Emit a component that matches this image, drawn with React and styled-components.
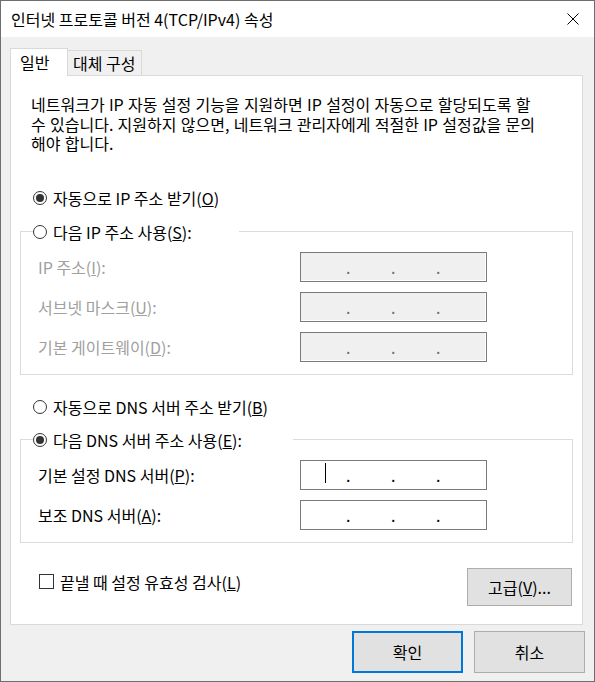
import React from "react";
import styled, { createGlobalStyle } from "styled-components";

const GlobalStyle = createGlobalStyle`
  html, body {
    margin: 0;
    padding: 0;
    background: #fff;
  }
  body {
    font-family: "Noto Sans CJK KR", "Noto Sans", sans-serif;
  }
`;

const Window = styled.div`
  width: 595px;
  height: 682px;
  box-sizing: border-box;
  border: 1px solid #6e6e6e;
  display: flex;
  flex-direction: column;
  background: #f0f0f0;
  font-family: "Noto Sans CJK KR", "Noto Sans", sans-serif;
  font-size: 16px;
  color: #000;
`;

const TitleBar = styled.div`
  height: 36px;
  flex-shrink: 0;
  background: #fff;
  display: flex;
  align-items: center;
  justify-content: space-between;
  padding: 0 15px 0 10px;
`;

const Title = styled.div`
  line-height: 20px;
  white-space: nowrap;
`;

const Body = styled.div`
  flex: 1;
  display: flex;
  flex-direction: column;
  padding: 11px 9px 8px 9px;
`;

const Tabs = styled.div`
  display: flex;
  align-items: flex-end;
  height: 27px;
`;

const Tab = styled.div`
  box-sizing: border-box;
  display: flex;
  align-items: center;
  white-space: nowrap;
  border: 1px solid #d9d9d9;
  border-bottom: none;
  line-height: 20px;
  background: ${(p) => (p.$active ? "#fff" : "#f0f0f0")};
  width: ${(p) => (p.$active ? "58px" : "75px")};
  height: ${(p) => (p.$active ? "28px" : "25px")};
  margin-bottom: ${(p) => (p.$active ? "-1px" : "0")};
  margin-left: ${(p) => (p.$active ? "0" : "-1px")};
  padding: ${(p) => (p.$active ? "0 0 2px 9px" : "0 0 0 5px")};
  position: relative;
  z-index: ${(p) => (p.$active ? 1 : 0)};
`;

const Panel = styled.div`
  height: 550px;
  box-sizing: border-box;
  margin-right: 2px;
  border: 1px solid #d9d9d9;
  background: #fff;
  display: flex;
  flex-direction: column;
`;

const Intro = styled.div`
  margin: 19px 0 0 20px;
  display: flex;
  flex-direction: column;
  word-spacing: 0.7px;
`;

const IntroLine = styled.span`
  height: 19.5px;
  line-height: 19.5px;
  white-space: nowrap;
`;

const Option = styled.label`
  display: flex;
  align-items: center;
  gap: 6px;
  height: 20px;
  line-height: 20px;
  white-space: nowrap;
  margin-top: ${(p) => p.$top || 0}px;
  margin-left: ${(p) => p.$left || 0}px;
`;

const Radio = styled.span`
  width: 14px;
  height: 14px;
  box-sizing: border-box;
  border: 1px solid #333;
  border-radius: 50%;
  background: #fff;
  flex-shrink: 0;
  display: flex;
  align-items: center;
  justify-content: center;

  &::after {
    content: "";
    width: 8px;
    height: 8px;
    border-radius: 50%;
    background: ${(p) => (p.$checked ? "#333" : "transparent")};
  }
`;

const Group = styled.fieldset`
  margin: ${(p) => p.$top}px 9px 0 9px;
  padding: 10px 0 12px 0;
  min-width: 0;
  border: 1px solid #dcdcdc;
  display: flex;
  flex-direction: column;
  gap: 10px;

  & > legend {
    padding: 0;
    margin-left: 12px;
    width: ${(p) => p.$legend}px;
  }
`;

const Row = styled.div`
  display: flex;
  align-items: center;
  height: 30px;
  padding-left: 17px;
`;

const Label = styled.span`
  width: 262px;
  line-height: 20px;
  white-space: nowrap;
  color: ${(p) => (p.$disabled ? "#a0a0a0" : "#000")};
`;

const IpBox = styled.div`
  position: relative;
  width: 187px;
  height: 30px;
  box-sizing: border-box;
  border: 1px solid #7a7a7a;
  background: ${(p) => (p.$disabled ? "#f0f0f0" : "#fff")};
  box-shadow: ${(p) => (p.$disabled ? "inset -1px -1px 0 #fff" : "none")};
  display: flex;
  align-items: center;
  padding-left: 45px;
  gap: 41px;
  color: ${(p) => (p.$disabled ? "#6d6d6d" : "#000")};

  &::before {
    content: "";
    display: ${(p) => (p.$caret ? "block" : "none")};
    position: absolute;
    left: 24px;
    top: 2px;
    width: 1px;
    height: 20px;
    background: #000;
  }
`;

const Dot = styled.span`
  width: 4px;
  text-align: center;
  line-height: 20px;
`;

const Options = styled.div`
  display: flex;
  justify-content: space-between;
  align-items: flex-start;
  margin-top: 25px;
  padding: 0 10px 0 28px;
`;

const CheckLabel = styled.label`
  display: flex;
  align-items: center;
  gap: 6px;
  height: 20px;
  margin-top: 4px;
  line-height: 20px;
  white-space: nowrap;
`;

const CheckBox = styled.span`
  width: 15px;
  height: 15px;
  box-sizing: border-box;
  border: 1px solid #333;
  background: #fff;
`;

const Button = styled.button`
  box-sizing: border-box;
  width: ${(p) => p.$w}px;
  height: ${(p) => p.$h}px;
  padding: 0;
  background: #e1e1e1;
  border: ${(p) => (p.$default ? "2px solid #0078d7" : "1px solid #adadad")};
  font-family: inherit;
  font-size: 16px;
  color: #000;
  line-height: 20px;
`;

const Footer = styled.div`
  display: flex;
  justify-content: flex-end;
  gap: 11px;
  margin-top: 6px;
`;

const CloseIcon = () => (
  <svg width="12" height="12" viewBox="0 0 12 12">
    <path d="M0.5 0.5 L11.5 11.5 M11.5 0.5 L0.5 11.5" stroke="#000" strokeWidth="1" fill="none" />
  </svg>
);

const IpField = ({ disabled, caret }) => (
  <IpBox $disabled={disabled} $caret={caret}>
    <Dot>.</Dot>
    <Dot>.</Dot>
    <Dot>.</Dot>
  </IpBox>
);

export default function App() {
  return (
    <>
      <GlobalStyle />
      <Window>
        <TitleBar>
          <Title>인터넷 프로토콜 버전 4(TCP/IPv4) 속성</Title>
          <CloseIcon />
        </TitleBar>
        <Body>
          <Tabs>
            <Tab $active>일반</Tab>
            <Tab>대체 구성</Tab>
          </Tabs>
          <Panel>
            <Intro>
              <IntroLine>네트워크가 IP 자동 설정 기능을 지원하면 IP 설정이 자동으로 할당되도록 할</IntroLine>
              <IntroLine>수 있습니다. 지원하지 않으면, 네트워크 관리자에게 적절한 IP 설정값을 문의</IntroLine>
              <IntroLine>해야 합니다.</IntroLine>
            </Intro>

            <Option $top={34} $left={22}>
              <Radio $checked />
              <span>
                자동으로 IP 주소 받기(<u>O</u>)
              </span>
            </Option>

            <Group $top={14} $legend={206}>
              <legend>
                <Option>
                  <Radio />
                  <span>
                    다음 IP 주소 사용(<u>S</u>):
                  </span>
                </Option>
              </legend>
              <Row>
                <Label $disabled>
                  IP 주소(<u>I</u>):
                </Label>
                <IpField disabled />
              </Row>
              <Row>
                <Label $disabled>
                  서브넷 마스크(<u>U</u>):
                </Label>
                <IpField disabled />
              </Row>
              <Row>
                <Label $disabled>
                  기본 게이트웨이(<u>D</u>):
                </Label>
                <IpField disabled />
              </Row>
            </Group>

            <Option $top={22} $left={22}>
              <Radio />
              <span>
                자동으로 DNS 서버 주소 받기(<u>B</u>)
              </span>
            </Option>

            <Group $top={13} $legend={260}>
              <legend>
                <Option>
                  <Radio $checked />
                  <span>
                    다음 DNS 서버 주소 사용(<u>E</u>):
                  </span>
                </Option>
              </legend>
              <Row>
                <Label>
                  기본 설정 DNS 서버(<u>P</u>):
                </Label>
                <IpField caret />
              </Row>
              <Row>
                <Label>
                  보조 DNS 서버(<u>A</u>):
                </Label>
                <IpField />
              </Row>
            </Group>

            <Options>
              <CheckLabel>
                <CheckBox />
                <span>
                  끝낼 때 설정 유효성 검사(<u>L</u>)
                </span>
              </CheckLabel>
              <Button $w={105} $h={38}>
                고급(<u>V</u>)...
              </Button>
            </Options>
          </Panel>
          <Footer>
            <Button $default $w={111} $h={42}>
              확인
            </Button>
            <Button $w={111} $h={42}>
              취소
            </Button>
          </Footer>
        </Body>
      </Window>
    </>
  );
}
